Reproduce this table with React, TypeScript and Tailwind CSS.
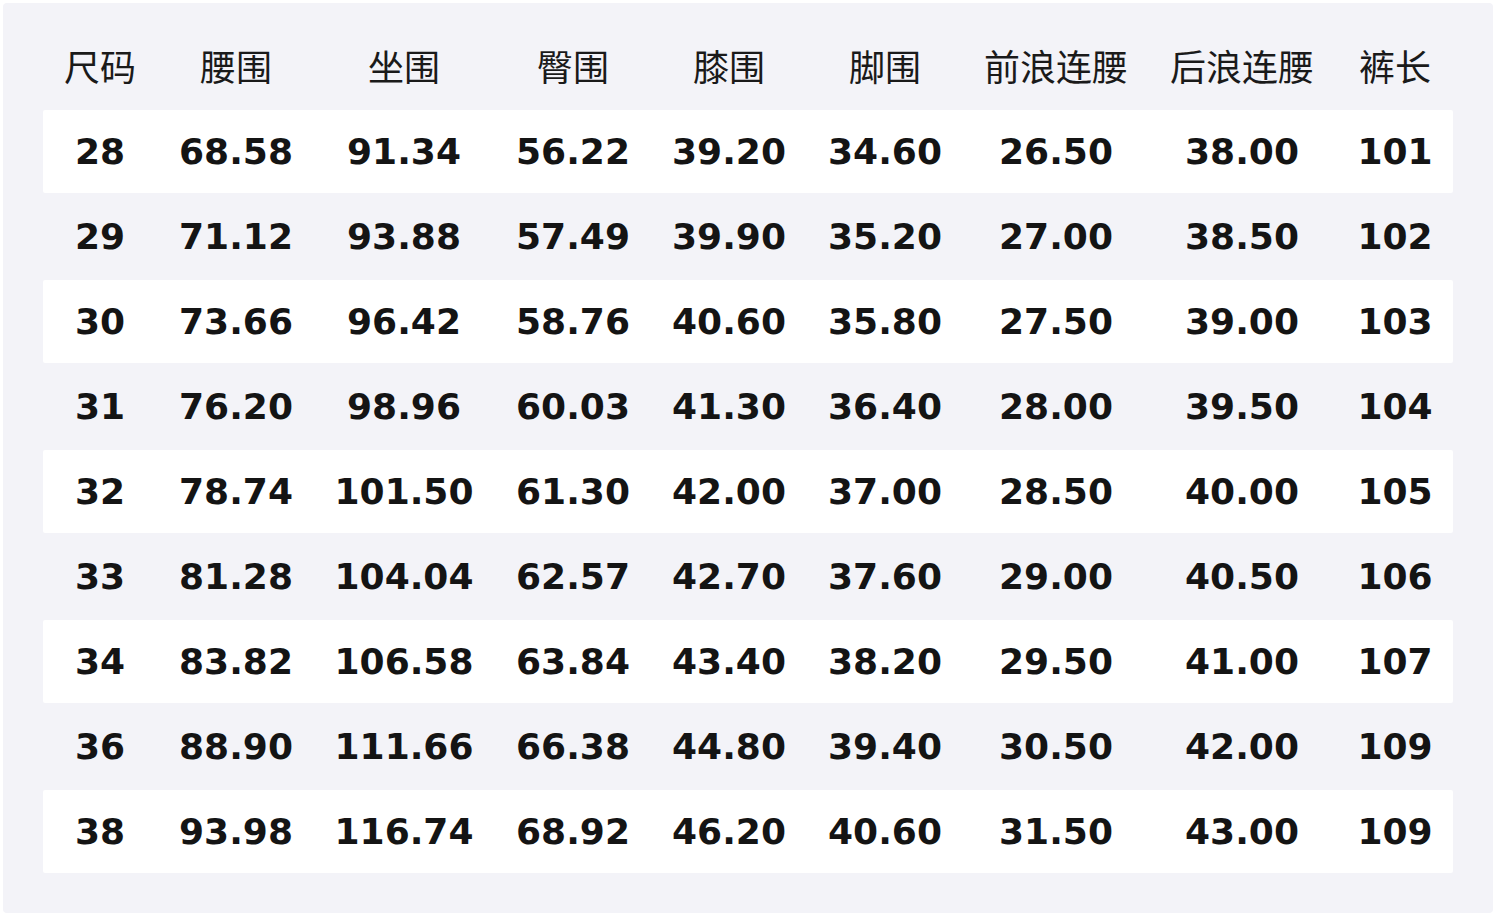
import React from 'react';

const headers = ['尺码', '腰围', '坐围', '臀围', '膝围', '脚围', '前浪连腰', '后浪连腰', '裤长'];

const rows: string[][] = [
  ['28', '68.58', '91.34', '56.22', '39.20', '34.60', '26.50', '38.00', '101'],
  ['29', '71.12', '93.88', '57.49', '39.90', '35.20', '27.00', '38.50', '102'],
  ['30', '73.66', '96.42', '58.76', '40.60', '35.80', '27.50', '39.00', '103'],
  ['31', '76.20', '98.96', '60.03', '41.30', '36.40', '28.00', '39.50', '104'],
  ['32', '78.74', '101.50', '61.30', '42.00', '37.00', '28.50', '40.00', '105'],
  ['33', '81.28', '104.04', '62.57', '42.70', '37.60', '29.00', '40.50', '106'],
  ['34', '83.82', '106.58', '63.84', '43.40', '38.20', '29.50', '41.00', '107'],
  ['36', '88.90', '111.66', '66.38', '44.80', '39.40', '30.50', '42.00', '109'],
  ['38', '93.98', '116.74', '68.92', '46.20', '40.60', '31.50', '43.00', '109'],
];

const cols = 'grid grid-cols-[114px_158px_178px_160px_152px_160px_182px_190px_116px]';

const App: React.FC = () => {
  return (
    <div className="w-[1496px] h-[918px] bg-white p-[3px]">
      <div className="h-[910px] w-[1490px] bg-[#f3f3f8] rounded-[4px] px-[40px] pt-[22px]">
        {/* header */}
        <div className={`${cols} h-[85px] pb-[6px] items-center`}>
          {headers.map((h) => (
            <div
              key={h}
              className="text-center text-[36px] text-[#1a1a1a] font-['Noto_Sans_CJK_SC',sans-serif] leading-none"
            >
              {h}
            </div>
          ))}
        </div>

        <div className="flex flex-col gap-[2px]">
          {rows.map((r, i) => (
            <div
              key={i}
              className={`${cols} h-[83px] items-center rounded-[2px] ${i % 2 === 0 ? 'bg-white' : ''}`}
            >
              {r.map((v, j) => (
                <div
                  key={j}
                  className="text-center text-[36px] font-bold text-[#141414] font-['DejaVu_Sans',sans-serif] leading-none"
                >
                  {v}
                </div>
              ))}
            </div>
          ))}
        </div>
      </div>
    </div>
  );
};

export default App;
